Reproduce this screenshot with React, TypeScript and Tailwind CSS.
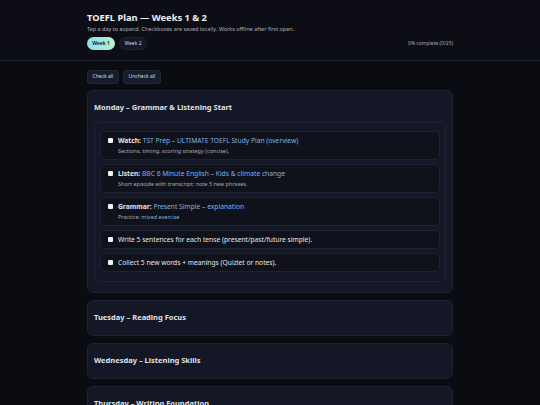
import { FC } from "react";

type Item = {
  label?: string;
  link?: string;
  text?: string;
  sub?: string;
  subLink?: string;
};

const mondayItems: Item[] = [
  { label: "Watch:", link: "TST Prep – ULTIMATE TOEFL Study Plan (overview)", sub: "Sections, timing, scoring strategy (concise)." },
  { label: "Listen:", link: "BBC 6 Minute English – Kids & climate change", sub: "Short episode with transcript; note 5 new phrases." },
  { label: "Grammar:", link: "Present Simple – explanation", sub: "Practice: ", subLink: "mixed exercise" },
  { text: "Write 5 sentences for each tense (present/past/future simple)." },
  { text: "Collect 5 new words + meanings (Quizlet or notes)." },
];

const days = ["Tuesday – Reading Focus", "Wednesday – Listening Skills", "Thursday – Writing Foundation"];

const TaskRow: FC<{ item: Item }> = ({ item }) => (
  <div className="flex items-start gap-[5px] rounded-[4px] border border-[#1d2231] bg-[#0f121a] px-[7px] py-[4px]">
    <input type="checkbox" className="mt-[2px] h-[5px] w-[5px] shrink-0 appearance-none rounded-[1px] bg-[#f1f1f1]" />
    <div className="flex flex-col gap-[2px]">
      <div className="text-[6.7px] leading-[9px] text-[#e3e6ec]">
        {item.label && <span className="font-bold">{item.label} </span>}
        {item.link && <span className="text-[#7fb0e2]">{item.link}</span>}
        {item.text}
      </div>
      {item.sub && (
        <div className="text-[5.5px] leading-[8px] text-[#a3aab7]">
          {item.sub}
          {item.subLink && <span className="text-[#7fb0e2]">{item.subLink}</span>}
        </div>
      )}
    </div>
  </div>
);

const DayCard: FC<{ title: string; open?: boolean }> = ({ title, open }) => (
  <div className="rounded-[6px] border border-[#1e2333] bg-[#141826] p-[6px]">
    <div className="flex h-[22px] items-center text-[7.5px] font-bold text-[#dfe2e8]">{title}</div>
    {open && (
      <div className="mb-[4px] mt-[3px] flex flex-col gap-[4px] rounded-[5px] border border-[#1e2333] px-[5px] pb-[9px] pt-[8px]">
        {mondayItems.map((it, i) => (
          <TaskRow key={i} item={it} />
        ))}
      </div>
    )}
  </div>
);

export default function App() {
  return (
    <div className="min-h-[405px] bg-[#0b0c12] font-['Noto_Sans',sans-serif]">
      <header className="border-b border-[#1b1e28] bg-[#0d0e15]">
        <div className="mx-auto w-[366px] pb-[10px] pt-[12px]">
          <h1 className="text-[9.3px] font-bold leading-[12px] text-[#eceef2]">TOEFL Plan — Weeks 1 &amp; 2</h1>
          <p className="mt-[2px] text-[5.5px] leading-[7px] text-[#a4abb8]">
            Tap a day to expand. Checkboxes are saved locally. Works offline after first open.
          </p>
          <div className="mt-[4px] flex items-center">
            <button className="h-[13px] w-[28px] rounded-full bg-gradient-to-r from-[#8fdcf4] to-[#b2f3cf] text-[5px] font-semibold text-[#0b1220]">
              Week 1
            </button>
            <button className="ml-[4px] h-[13px] w-[28px] rounded-full border border-[#1e2333] bg-[#141826] text-[5px] text-[#cfd4dd]">
              Week 2
            </button>
            <span className="ml-auto text-[5px] text-[#a4abb8]">0% complete (0/25)</span>
          </div>
        </div>
      </header>
      <main className="mx-auto w-[366px] pt-[9px]">
        <div className="flex gap-[4px]">
          <button className="h-[14px] w-[32px] rounded-[3px] border border-[#222838] bg-[#171c2a] text-[5px] text-[#d6dae2]">
            Check all
          </button>
          <button className="h-[14px] w-[38px] rounded-[3px] border border-[#222838] bg-[#171c2a] text-[5px] text-[#d6dae2]">
            Uncheck all
          </button>
        </div>
        <div className="mt-[6px] flex flex-col gap-[7px]">
          <DayCard title="Monday – Grammar & Listening Start" open />
          {days.map((d) => (
            <DayCard key={d} title={d} />
          ))}
        </div>
      </main>
    </div>
  );
}
